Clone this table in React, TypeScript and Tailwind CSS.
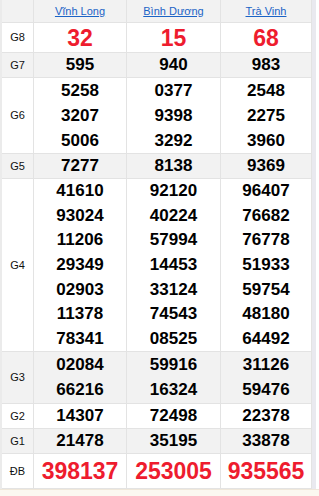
import React from "react";

type Row = { label: string; h: string; bg: string; cols: string[][]; big?: boolean };

const rows: Row[] = [
  { label: "G8", h: "h-[30px]", bg: "bg-white", cols: [["32"], ["15"], ["68"]], big: true },
  { label: "G7", h: "h-[25px]", bg: "bg-[#f2f2f2]", cols: [["595"], ["940"], ["983"]] },
  {
    label: "G6",
    h: "h-[76px]",
    bg: "bg-white",
    cols: [
      ["5258", "3207", "5006"],
      ["0377", "9398", "3292"],
      ["2548", "2275", "3960"],
    ],
  },
  { label: "G5", h: "h-[25px]", bg: "bg-[#f2f2f2]", cols: [["7277"], ["8138"], ["9369"]] },
  {
    label: "G4",
    h: "h-[173px]",
    bg: "bg-white",
    cols: [
      ["41610", "93024", "11206", "29349", "02903", "11378", "78341"],
      ["92120", "40224", "57994", "14453", "33124", "74543", "08525"],
      ["96407", "76682", "76778", "51933", "59754", "48180", "64492"],
    ],
  },
  {
    label: "G3",
    h: "h-[52px]",
    bg: "bg-[#f2f2f2]",
    cols: [
      ["02084", "66216"],
      ["59916", "16324"],
      ["31126", "59476"],
    ],
  },
  { label: "G2", h: "h-[25px]", bg: "bg-white", cols: [["14307"], ["72498"], ["22378"]] },
  { label: "G1", h: "h-[25px]", bg: "bg-[#f2f2f2]", cols: [["21478"], ["35195"], ["33878"]] },
  { label: "ĐB", h: "h-[35px]", bg: "bg-white", cols: [["398137"], ["253005"], ["935565"]], big: true },
];

const widths = ["w-[93px]", "w-[94px]", "w-[91px]"];
const headers = ["Vĩnh Long", "Bình Dương", "Trà Vinh"];

export default function App() {
  return (
    <div
      className="w-[319px] h-[496px] bg-white overflow-hidden flex flex-col"
      style={{ fontFamily: '"Liberation Sans", Arial, sans-serif' }}
    >
      <div className="flex">
        <div className="w-[312px] border-l-2 border-[#ebebeb] flex flex-col">
          <div className="flex h-[23px] bg-[#f2f2f2] border-b border-[#e3e3e3]">
            <div className="w-[32px] border-r border-[#e3e3e3]" />
            {headers.map((h, i) => (
              <div
                key={h}
                className={`${widths[i]} border-r border-[#e3e3e3] flex items-center justify-center`}
              >
                <span className="text-[11px] leading-none text-[#1b63c6] underline">{h}</span>
              </div>
            ))}
          </div>
          {rows.map((r) => (
            <div key={r.label} className={`flex ${r.h} ${r.bg} border-b border-[#e3e3e3]`}>
              <div className="w-[32px] border-r border-[#e3e3e3] flex items-center justify-center text-[11px] text-[#111]">
                {r.label}
              </div>
              {r.cols.map((c, i) => (
                <div
                  key={i}
                  className={`${widths[i]} border-r border-[#e3e3e3] flex flex-col items-center justify-around`}
                >
                  {c.map((n, j) =>
                    r.big ? (
                      <span key={j} className="text-[23px] leading-[24px] font-bold text-[#ee1c2e]">
                        {n}
                      </span>
                    ) : (
                      <span key={j} className="text-[17px] leading-[20px] font-bold text-black">
                        {n}
                      </span>
                    )
                  )}
                </div>
              ))}
            </div>
          ))}
        </div>
        <div className="w-[4px] bg-[#e9e9ef]" />
      </div>
      <div className="flex-1 bg-[#fbf7f0] border-t border-[#efe7da]" />
    </div>
  );
}
